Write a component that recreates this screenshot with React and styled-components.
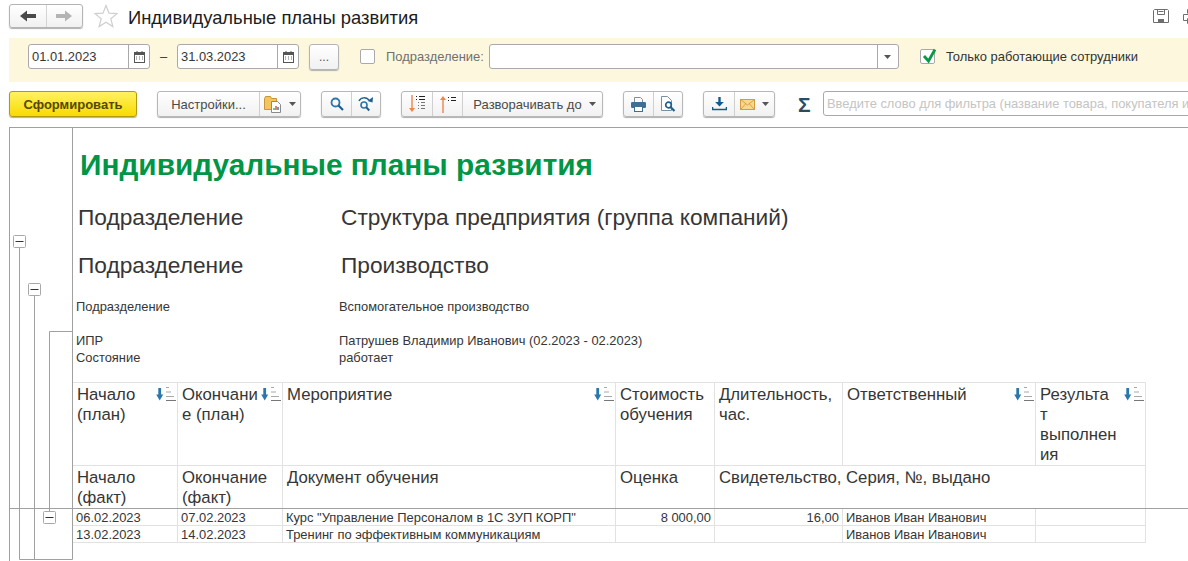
import React from 'react'
import styled, { createGlobalStyle } from 'styled-components'

const lineColor = '#a0a0a0'
const cellLine = '#e2e2e2'
const textColor = '#363636'

const GlobalStyle = createGlobalStyle`
    html, body {
        margin: 0;
        padding: 0;
        background: #fff;
    }
    body {
        font-family: "Liberation Sans", Arial, sans-serif;
        color: ${textColor};
    }
    * {
        box-sizing: border-box;
    }
`

const Page = styled.div`
    width: 1188px;
    height: 561px;
    overflow: hidden;
    display: flex;
    flex-direction: column;
    background: #fff;
`

const TitleBar = styled.div`
    height: 38px;
    padding: 4px 0 0 9px;
    display: flex;
    align-items: flex-start;
`

const NavGroup = styled.div`
    width: 74px;
    height: 24px;
    display: flex;
    border: 1px solid #b4b4b4;
    border-radius: 3px;
    background: linear-gradient(#ffffff, #f1f1f1);
    box-shadow: 0 1px 1px #b0b0b0;
`

const NavCell = styled.div`
    flex: 1;
    display: flex;
    align-items: center;
    justify-content: center;
    & + & {
        border-left: 1px solid #d4d4d4;
    }
`

const StarBox = styled.div`
    margin: 0 10px 0 11px;
    height: 24px;
    display: flex;
    align-items: center;
`

const PageTitle = styled.h1`
    margin: 0;
    font-size: 18.4px;
    line-height: 27px;
    font-weight: 400;
    color: #1c1c1c;
    white-space: nowrap;
`

const TitleActions = styled.div`
    margin: 5px -11px 0 auto;
    display: flex;
    gap: 14px;
    flex: none;
`

const FilterPanel = styled.div`
    height: 44px;
    margin-left: 9px;
    padding: 0 0 7px 19px;
    display: flex;
    align-items: center;
    background: #fdf8dd;
`

const Field = styled.div`
    width: ${p => p.$width}px;
    flex: none;
    height: 25px;
    display: flex;
    border: 1px solid #a9a9a9;
    border-radius: 3px;
    background: #fff;
`

const FieldInput = styled.input`
    flex: 1;
    min-width: 0;
    border: 0;
    outline: 0;
    padding: 0 3px;
    background: transparent;
    font: 12.9px "Liberation Sans", Arial, sans-serif;
    color: ${textColor};
    &::placeholder {
        color: #c4c4c4;
        opacity: 1;
    }
`

const FieldButton = styled.div`
    width: 21px;
    display: flex;
    align-items: center;
    justify-content: center;
    border-left: 1px solid #a9a9a9;
`

const Dash = styled.span`
    width: 27px;
    flex: none;
    text-align: center;
    font-size: 13px;
`

const MoreButton = styled.div`
    width: 30px;
    height: 26px;
    flex: none;
    margin: 0 21px 0 10px;
    display: flex;
    align-items: center;
    justify-content: center;
    border: 1px solid #b4b4b4;
    border-radius: 3px;
    background: linear-gradient(#ffffff, #f1f1f1);
    box-shadow: 0 1px 1px #b0b0b0;
    font-size: 12px;
    color: #555;
`

const CheckBox = styled.div`
    position: relative;
    width: 15px;
    height: 15px;
    flex: none;
    margin-left: ${p => p.$left || 0}px;
    border: 1px solid #a9a9a9;
    border-radius: 2px;
    background: #fff;
`

const CheckMark = styled.svg`
    position: absolute;
    left: 0;
    top: -2px;
    overflow: visible;
`

const FilterLabel = styled.span`
    margin: 0 ${p => p.$after || 0}px 0 11px;
    font-size: 12.95px;
    white-space: nowrap;
    color: ${p => (p.$muted ? '#707070' : '#333')};
`

const Toolbar = styled.div`
    height: 27px;
    margin-top: 9px;
    padding-left: 9px;
    display: flex;
    gap: 20px;
    & > * {
        flex-shrink: 0;
    }
`

const RunButton = styled.div`
    width: 128px;
    height: 26px;
    display: flex;
    align-items: center;
    justify-content: center;
    border: 1px solid #b09a10;
    border-radius: 3px;
    background: linear-gradient(#fff263, #f9da00);
    box-shadow: 0 1px 1px #b0b0b0;
    font-size: 13px;
    font-weight: 700;
    color: #544800;
`

const ButtonGroup = styled.div`
    height: 26px;
    display: flex;
    border: 1px solid #b8b8b8;
    border-radius: 3px;
    background: linear-gradient(#ffffff, #f1f1f1);
    box-shadow: 0 1px 1px #b0b0b0;
`

const GroupCell = styled.div`
    width: ${p => p.$width}px;
    padding-left: ${p => p.$shift || 0}px;
    display: flex;
    align-items: center;
    justify-content: center;
    gap: 7px;
    font-size: 13px;
    color: #4a4a4a;
    white-space: nowrap;
    & + & {
        border-left: 1px solid #cfcfcf;
    }
`

const SumSign = styled.span`
    margin-left: 3px;
    width: 20px;
    font-size: 21px;
    line-height: 27px;
    font-weight: 700;
    color: #2f4a5f;
`

const SearchField = styled(Field)`
    margin-left: -15px;
`

const Report = styled.div`
    flex: 1;
    min-height: 0;
    margin: 9px 0 0 9px;
    display: flex;
    border-top: 1px solid ${lineColor};
    border-left: 1px solid ${lineColor};
`

const Gutter = styled.svg`
    flex: 0 0 63px;
    display: block;
`

const Sheet = styled.div`
    flex: 1;
    min-width: 0;
    display: flex;
    flex-direction: column;
`

const ReportTitle = styled.div`
    height: 65px;
    padding: 20px 0 0 7px;
    font-size: 29.8px;
    line-height: 34px;
    font-weight: 700;
    color: #009646;
    white-space: nowrap;
`

const GroupRow = styled.div`
    height: ${p => p.$height}px;
    display: grid;
    grid-template-columns: ${p => p.$label}px 1fr;
    align-items: center;
    padding-left: ${p => p.$indent}px;
    font-size: ${p => p.$size}px;
    color: ${textColor};
    white-space: nowrap;
`

const Spacer = styled.div`
    height: ${p => p.$height}px;
    flex: none;
`

const HeadGrid = styled.div`
    width: 1073px;
    display: grid;
    grid-template-columns: 105px 105px 333px 99px 128px 193px 110px;
    grid-template-rows: 83px 42px;
    border-top: 1px solid ${cellLine};
`

const HeadCell = styled.div`
    display: flex;
    justify-content: space-between;
    align-items: flex-start;
    padding: 2px 1px 0 4px;
    font-size: 16.75px;
    line-height: 20px;
    border-right: 1px solid ${cellLine};
    border-bottom: ${p => (p.$last ? '0' : `1px solid ${cellLine}`)};
    grid-column: span ${p => p.$span || 1};
    white-space: nowrap;
`

const SortMark = styled.svg`
    flex: none;
    margin-top: 2px;
`

const TableRule = styled.div`
    height: 1px;
    flex: none;
    background: ${lineColor};
`

const DataGrid = styled.div`
    width: 1073px;
    display: grid;
    grid-template-columns: 105px 105px 333px 99px 128px 193px 110px;
    grid-auto-rows: 17px;
`

const DataCell = styled.div`
    padding: 1px 3px 0;
    font-size: 12.95px;
    line-height: 15px;
    text-align: ${p => (p.$right ? 'right' : 'left')};
    border-right: 1px solid ${cellLine};
    border-bottom: 1px solid ${cellLine};
    white-space: nowrap;
    overflow: hidden;
`

// мелкие иконки
const BackIcon = ({ color }) => (
    <svg width="16" height="12" viewBox="0 0 16 12">
        <polygon fill={color} points="0,6 7,0.5 7,4 16,4 16,8 7,8 7,11.5" />
    </svg>
)

const ForwardIcon = ({ color }) => (
    <svg width="16" height="12" viewBox="0 0 16 12">
        <polygon fill={color} points="16,6 9,0.5 9,4 0,4 0,8 9,8 9,11.5" />
    </svg>
)

const StarIcon = () => (
    <svg width="24" height="24" viewBox="0 0 24 24">
        <polygon
            fill="#fff"
            stroke="#cfcfcf"
            strokeWidth="1.2"
            points="12,1.5 15,9.2 23,9.6 16.8,14.7 18.9,22.6 12,18.2 5.1,22.6 7.2,14.7 1,9.6 9,9.2"
        />
    </svg>
)

const SaveIcon = () => (
    <svg width="16" height="15" viewBox="0 0 16 15">
        <path d="M1.5.5h13l1 1v12h-15v-12z" fill="none" stroke="#6e6e6e" />
        <path d="M4.5.5v5h7v-5M5.5 2.5h5" fill="none" stroke="#6e6e6e" />
        <rect x="5" y="10" width="6" height="4" fill="#6e6e6e" />
    </svg>
)

const PrintTopIcon = () => (
    <svg width="16" height="15" viewBox="0 0 16 15">
        <path d="M4.5 4.5v-4h7v4M.5 5.5h15v6h-4M4.5 11.5h-4v-6M4.5 9.5h7v5h-7z" fill="none" stroke="#6e6e6e" />
    </svg>
)

const CalendarIcon = () => (
    <svg width="11" height="12" viewBox="0 0 11 12">
        <rect x="0.5" y="1.5" width="10" height="10" fill="#fff" stroke="#555" />
        <rect x="0" y="1" width="11" height="3" fill="#555" />
        <path d="M3 0v2M8 0v2" stroke="#555" />
        <path d="M2 6h1M5 6h1M8 6h1M2 8h1M5 8h1M8 8h1" stroke="#666" />
    </svg>
)

const Caret = () => (
    <svg width="7" height="4" viewBox="0 0 7 4">
        <polygon fill="#555" points="0,0 7,0 3.5,4" />
    </svg>
)

const FolderIcon = () => (
    <svg width="18" height="18" viewBox="0 0 18 18">
        <path d="M.5 3.5l1-2h5l1 2h5v11H.5z" fill="#f2c65c" stroke="#c8963a" />
        <path d="M7.5 6.5h6l3 3v8h-9z" fill="#fff" stroke="#8a8a8a" />
        <path d="M10 15v-2" stroke="#3aa655" strokeWidth="1.4" />
        <path d="M12 15v-4" stroke="#d24a3a" strokeWidth="1.4" />
        <path d="M14 15v-3" stroke="#2f6fa8" strokeWidth="1.4" />
    </svg>
)

const SearchIcon = () => (
    <svg width="14" height="14" viewBox="0 0 14 14">
        <circle cx="5.5" cy="5.5" r="4" fill="none" stroke="#2a76ad" strokeWidth="1.8" />
        <path d="M8.5 8.5l4.5 4.5" stroke="#1f5f8e" strokeWidth="2.2" />
    </svg>
)

const SearchNextIcon = () => (
    <svg width="16" height="16" viewBox="0 0 16 16">
        <circle cx="6" cy="9" r="3" fill="none" stroke="#2a76ad" strokeWidth="1.6" />
        <path d="M8.2 11.2l3 3.3" stroke="#1f5f8e" strokeWidth="2" />
        <path d="M1 5c2-4 7-4 10-1" fill="none" stroke="#1f5f8e" strokeWidth="1.5" />
        <polygon fill="#1f5f8e" points="15,1 14.5,6.5 9.5,5" />
    </svg>
)

const ExpandDownIcon = () => (
    <svg width="16" height="18" viewBox="0 0 16 18">
        <path d="M3 0v15" stroke="#f0834a" strokeWidth="1.4" />
        <polygon fill="#f0834a" points="0,13 6,13 3,17" />
        <path d="M7 1.5h1M10 1.5h6M7 4.5h1M10 4.5h6" stroke="#222" />
        <path d="M9 7.5h1M12 7.5h4M9 10.5h1M12 10.5h4M9 13.5h1M12 13.5h4" stroke="#777" />
    </svg>
)

const ExpandUpIcon = () => (
    <svg width="16" height="18" viewBox="0 0 16 18">
        <path d="M3 3v15" stroke="#f0834a" strokeWidth="1.4" />
        <polygon fill="#f0834a" points="0,5 6,5 3,1" />
        <path d="M8 2.5h1M11 2.5h5M8 5.5h1M11 5.5h5" stroke="#222" />
    </svg>
)

const PrinterIcon = () => (
    <svg width="15" height="15" viewBox="0 0 15 15">
        <path d="M3.5 5V.5h6l2 2V5" fill="none" stroke="#7d8f9e" />
        <rect x="0" y="5" width="15" height="6" rx="1.2" fill="#3f6f94" />
        <rect x="3.5" y="9.5" width="8" height="5" fill="#fff" stroke="#3f6f94" />
    </svg>
)

const PreviewIcon = () => (
    <svg width="16" height="16" viewBox="0 0 16 16">
        <path d="M1.5.5h6l4 4v10h-10z" fill="#fff" stroke="#7d8f9e" />
        <circle cx="8.5" cy="9" r="2.8" fill="#fff" stroke="#1f5f8e" strokeWidth="1.7" />
        <path d="M10.5 11l4 4" stroke="#1f5f8e" strokeWidth="2.2" />
    </svg>
)

const DownloadIcon = () => (
    <svg width="15" height="14" viewBox="0 0 15 14">
        <path d="M7.5 0v6" stroke="#0f5c8e" strokeWidth="2.4" />
        <polygon fill="#0f5c8e" points="3.2,5 11.8,5 7.5,9.5" />
        <path d="M.5 10v2.5h14V10" fill="none" stroke="#0f5c8e" strokeWidth="1.6" />
    </svg>
)

const MailIcon = () => (
    <svg width="15" height="11" viewBox="0 0 15 11">
        <rect x="0.5" y="0.5" width="14" height="10" fill="#f8d78e" stroke="#d99a3a" />
        <path d="M.5.5l7 5.5 7-5.5M.5 10.5l5-5.5M14.5 10.5l-5-5.5" fill="none" stroke="#dd9f45" />
    </svg>
)

const SortIcon = () => (
    <SortMark width="21" height="15" viewBox="0 0 21 15">
        <path d="M4.7 1v8" stroke="#2a76ad" strokeWidth="2.8" />
        <polygon fill="#2a76ad" points="1.2,7.5 8.2,7.5 4.7,13.5" />
        <path d="M11 .5h3M11 5h5M11 9.5h8" stroke="#a8a8a8" />
        <path d="M11 13.5h10" stroke="#777" />
    </SortMark>
)

const TreeBox = ({ x, y }) => (
    <>
        <rect x={x} y={y} width="12" height="12" rx="1" fill="#fff" stroke="#a8a8a8" />
        <path d={`M${x + 2} ${y + 6}h8`} stroke="#333" />
    </>
)

const head = [
    { text: <>Начало<br />(план)</>, sort: true },
    { text: <>Окончани<br />е (план)</>, sort: true },
    { text: 'Мероприятие', sort: true },
    { text: <>Стоимость<br />обучения</> },
    { text: <>Длительность,<br />час.</> },
    { text: 'Ответственный', sort: true },
    { text: <>Результа<br />т<br />выполнен<br />ия</>, sort: true },
]

const head2 = [
    { text: <>Начало<br />(факт)</> },
    { text: <>Окончание<br />(факт)</> },
    { text: 'Документ обучения' },
    { text: 'Оценка' },
    { text: 'Свидетельство, Серия, №, выдано', span: 3 },
]

const rows = [
    ['06.02.2023', '07.02.2023', 'Курс "Управление Персоналом в 1С ЗУП КОРП"', '8 000,00', '16,00', 'Иванов Иван Иванович', ''],
    ['13.02.2023', '14.02.2023', 'Тренинг по эффективным коммуникациям', '', '', 'Иванов Иван Иванович', ''],
]

function App() {
    return (
        <Page>
            <GlobalStyle />
            <TitleBar>
                <NavGroup>
                    <NavCell><BackIcon color="#4a4a4a" /></NavCell>
                    <NavCell><ForwardIcon color="#b4b4b4" /></NavCell>
                </NavGroup>
                <StarBox><StarIcon /></StarBox>
                <PageTitle>Индивидуальные планы развития</PageTitle>
                <TitleActions>
                    <SaveIcon />
                    <PrintTopIcon />
                </TitleActions>
            </TitleBar>

            <FilterPanel>
                <Field $width={122}>
                    <FieldInput readOnly defaultValue="01.01.2023" />
                    <FieldButton><CalendarIcon /></FieldButton>
                </Field>
                <Dash>–</Dash>
                <Field $width={122}>
                    <FieldInput readOnly defaultValue="31.03.2023" />
                    <FieldButton><CalendarIcon /></FieldButton>
                </Field>
                <MoreButton>...</MoreButton>
                <CheckBox />
                <FilterLabel $muted $after={5}>Подразделение:</FilterLabel>
                <Field $width={410}>
                    <FieldInput readOnly />
                    <FieldButton><Caret /></FieldButton>
                </Field>
                <CheckBox $left={21}>
                    <CheckMark width="15" height="15" viewBox="0 0 15 15">
                        <path d="M3 8l4.5 5L14 1.5" fill="none" stroke="#0a9a47" strokeWidth="2.8" />
                    </CheckMark>
                </CheckBox>
                <FilterLabel>Только работающие сотрудники</FilterLabel>
            </FilterPanel>

            <Toolbar>
                <RunButton>Сформировать</RunButton>
                <ButtonGroup>
                    <GroupCell $width={101}>Настройки...</GroupCell>
                    <GroupCell $width={41}><FolderIcon /><Caret /></GroupCell>
                </ButtonGroup>
                <ButtonGroup>
                    <GroupCell $width={29}><SearchIcon /></GroupCell>
                    <GroupCell $width={29}><SearchNextIcon /></GroupCell>
                </ButtonGroup>
                <ButtonGroup>
                    <GroupCell $width={30}><ExpandDownIcon /></GroupCell>
                    <GroupCell $width={30}><ExpandUpIcon /></GroupCell>
                    <GroupCell $width={140} $shift={4}>Разворачивать до<Caret /></GroupCell>
                </ButtonGroup>
                <ButtonGroup>
                    <GroupCell $width={29}><PrinterIcon /></GroupCell>
                    <GroupCell $width={29}><PreviewIcon /></GroupCell>
                </ButtonGroup>
                <ButtonGroup>
                    <GroupCell $width={30}><DownloadIcon /></GroupCell>
                    <GroupCell $width={40}><MailIcon /><Caret /></GroupCell>
                </ButtonGroup>
                <SumSign>Σ</SumSign>
                <SearchField $width={420}>
                    <FieldInput readOnly placeholder="Введите слово для фильтра (название товара, покупателя и др.)" />
                </SearchField>
            </Toolbar>

            <Report>
                <Gutter width="63" height="433" viewBox="10 128 63 433">
                    <g fill="none" stroke={lineColor}>
                        <path d="M72.5 128V559.5H19.5V247" />
                        <path d="M34.5 295V559.5" />
                        <path d="M72.5 331.5H49.5V512" />
                        <path d="M10 508.5H73" />
                    </g>
                    <TreeBox x={13.5} y={235.5} />
                    <TreeBox x={28.5} y={283.5} />
                    <TreeBox x={43.5} y={511.5} />
                </Gutter>
                <Sheet>
                    <ReportTitle>Индивидуальные планы развития</ReportTitle>
                    <GroupRow $height={48} $label={263} $indent={5} $size={22.7}>
                        <span>Подразделение</span>
                        <span>Структура предприятия (группа компаний)</span>
                    </GroupRow>
                    <GroupRow $height={48} $label={263} $indent={5} $size={22.7}>
                        <span>Подразделение</span>
                        <span>Производство</span>
                    </GroupRow>
                    <Spacer $height={9} />
                    <GroupRow $height={17} $label={263} $indent={3} $size={12.9}>
                        <span>Подразделение</span>
                        <span>Вспомогательное производство</span>
                    </GroupRow>
                    <Spacer $height={17} />
                    <GroupRow $height={17} $label={263} $indent={3} $size={12.9}>
                        <span>ИПР</span>
                        <span>Патрушев Владимир Иванович (02.2023 - 02.2023)</span>
                    </GroupRow>
                    <GroupRow $height={17} $label={263} $indent={3} $size={12.9}>
                        <span>Состояние</span>
                        <span>работает</span>
                    </GroupRow>
                    <Spacer $height={16} />
                    <HeadGrid>
                        {head.map((cell, i) => (
                            <HeadCell key={i}>
                                <span>{cell.text}</span>
                                {cell.sort && <SortIcon />}
                            </HeadCell>
                        ))}
                        {head2.map((cell, i) => (
                            <HeadCell key={i} $last $span={cell.span}>
                                <span>{cell.text}</span>
                            </HeadCell>
                        ))}
                    </HeadGrid>
                    <TableRule />
                    <DataGrid>
                        {rows.map((row, r) =>
                            row.map((value, c) => (
                                <DataCell key={`${r}-${c}`} $right={c === 3 || c === 4}>{value}</DataCell>
                            ))
                        )}
                    </DataGrid>
                </Sheet>
            </Report>
        </Page>
    )
}

export default App
